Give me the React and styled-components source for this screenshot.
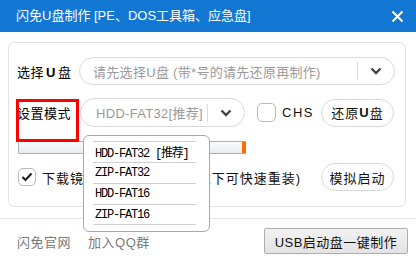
import React from 'react';
import styled, { createGlobalStyle } from 'styled-components';

const Global = createGlobalStyle`
  html, body { margin: 0; padding: 0; background: #fff; }
  body { font-family: "Liberation Sans", "Noto Sans CJK SC", sans-serif; }
  * { box-sizing: border-box; }
`;

const Window = styled.div`
  position: relative;
  width: 416px;
  height: 261px;
  overflow: hidden;
  background: #fff;
  display: flex;
  flex-direction: column;
`;

const TitleBar = styled.div`
  height: 32px;
  flex: none;
  background: #1177d3;
  color: #fff;
  display: flex;
  align-items: center;
  justify-content: space-between;
  padding: 0 12px 0 16px;
  font-size: 13px;
  line-height: 16px;
`;

const Card = styled.div`
  margin: 10px 10px 0 8px;
  border: 1px solid #e4e4e4;
  border-radius: 6px;
  padding: 14px 10px 15px 8px;
  display: flex;
  flex-direction: column;
`;

const Row = styled.div`
  display: flex;
  align-items: center;
  height: ${p => p.$h || 28}px;
  margin-top: ${p => p.$mt || 0}px;
`;

const Label = styled.div`
  width: ${p => p.$w}px;
  flex: none;
  font-size: 13px;
  color: #000;
  letter-spacing: 0.5px;
  b { font-weight: 700; margin: 0 2px; }
`;

const Select = styled.div`
  display: flex;
  align-items: center;
  height: 100%;
  ${p => (p.$w ? `width: ${p.$w}px; flex: none;` : 'flex: 1;')}
  border: 1px solid #d9d9d9;
  border-radius: 15px;
  padding-left: ${p => p.$pl || 13}px;
`;

const SelectText = styled.div`
  flex: 1;
  font-size: 13px;
  color: #9a9a9a;
  white-space: nowrap;
  overflow: hidden;
  letter-spacing: 0.3px;
`;

const SelectArrow = styled.div`
  flex: none;
  width: 37px;
  height: 18px;
  border-left: 1px solid #dcdcdc;
  display: flex;
  align-items: center;
  justify-content: center;
`;

const Check = styled.div`
  flex: none;
  width: ${p => p.$s}px;
  height: ${p => p.$s}px;
  margin-left: ${p => p.$ml}px;
  border: 1px solid #b9b9b9;
  border-radius: 5px;
  background: #fff;
  display: flex;
  align-items: center;
  justify-content: center;
`;

const Text = styled.div`
  font-size: 13px;
  color: ${p => p.$c || '#111'};
  margin-left: ${p => p.$ml || 0}px;
  letter-spacing: ${p => p.$ls || 1}px;
  white-space: nowrap;
`;

const PillButton = styled.div`
  flex: none;
  margin-left: auto;
  margin-right: 1px;
  width: 73px;
  height: 28px;
  border: 1px solid #dadada;
  border-radius: 14px;
  background: #fff;
  display: flex;
  align-items: center;
  justify-content: center;
  font-size: 13px;
  color: #111;
  letter-spacing: 1px;
  b { font-weight: 700; }
`;

const Progress = styled.div`
  margin: 14px 0 0 1px;
  width: 228px;
  height: 13px;
  border: 1px solid #aab2c0;
  border-right: none;
  background: linear-gradient(#fbfbfc, #e9ebf0);
  display: flex;
  justify-content: flex-end;
`;

const ProgressEnd = styled.div`
  width: 4px;
  height: 100%;
  background: #ff6a00;
`;

const Sep = styled.div`
  margin-top: 11px;
  height: 1px;
  background: #e6e6e6;
  flex: none;
`;

const Footer = styled.div`
  margin-top: 9px;
  height: 26px;
  display: flex;
  align-items: center;
  padding: 0 8px 0 17px;
`;

const Link = styled.div`
  font-size: 13px;
  color: #7a7a7a;
  margin-right: 17px;
  letter-spacing: 0.5px;
`;

const MakeButton = styled.div`
  margin-left: auto;
  width: 144px;
  height: 26px;
  border: 1px solid #adadad;
  border-radius: 2px;
  background: linear-gradient(#f2f2f2, #e3e3e3);
  display: flex;
  align-items: center;
  justify-content: center;
  font-size: 13px;
  color: #111;
  letter-spacing: 0.5px;
`;

const Highlight = styled.div`
  position: absolute;
  left: 16px;
  top: 99px;
  width: 63px;
  height: 43px;
  border: 3px solid #f00;
  pointer-events: none;
`;

const Menu = styled.div`
  position: absolute;
  left: 83px;
  top: 135px;
  width: 127px;
  height: 97px;
  background: #fff;
  border: 1px solid #a8a8a8;
  border-radius: 6px;
  padding: 5px 13px 0 9px;
`;

const MenuItem = styled.div`
  height: 21px;
  border-top: 1px solid #cfcfcf;
  ${p => (p.$last ? 'border-bottom: 1px solid #cfcfcf;' : '')}
  padding-left: 2px;
  display: flex;
  align-items: center;
  font-family: "Liberation Mono", "Noto Sans CJK SC", monospace;
  font-size: 12px;
  letter-spacing: -1.2px;
  color: #000;
  white-space: nowrap;
`;

const Chevron = () => (
  <svg width="12" height="8" viewBox="0 0 12 8">
    <polyline points="1.5,1.5 6,6 10.5,1.5" fill="none" stroke="#444" strokeWidth="2.4" />
  </svg>
);

const CloseIcon = () => (
  <svg width="13" height="13" viewBox="0 0 13 13">
    <path d="M1.5 1.5 L11.5 11.5 M11.5 1.5 L1.5 11.5" stroke="#fff" strokeWidth="2" />
  </svg>
);

const Tick = () => (
  <svg width="12" height="10" viewBox="0 0 12 10">
    <polyline points="1.5,5 4.5,8 10.5,1.5" fill="none" stroke="#222" strokeWidth="2.2" />
  </svg>
);

const menuItems = ['HDD-FAT32 [推荐]', 'ZIP-FAT32', 'HDD-FAT16', 'ZIP-FAT16'];

export default function App() {
  return (
    <Window>
      <Global />
      <TitleBar>
        <span>闪免U盘制作 [PE、DOS工具箱、应急盘]</span>
        <CloseIcon />
      </TitleBar>
      <Card>
        <Row>
          <Label $w={62}>选择<b>U</b>盘</Label>
          <Select>
            <SelectText>请先选择U盘 (带*号的请先还原再制作)</SelectText>
            <SelectArrow><Chevron /></SelectArrow>
          </Select>
        </Row>
        <Row $mt={13} $h={29}>
          <Label $w={63}>设置模式</Label>
          <Select $w={165} $pl={15}>
            <SelectText>HDD-FAT32[推荐]</SelectText>
            <SelectArrow><Chevron /></SelectArrow>
          </Select>
          <Check $s={19} $ml={12} />
          <Text $ml={6} $ls={1.5}>CHS</Text>
          <PillButton>还原<b>U</b>盘</PillButton>
        </Row>
        <Progress><ProgressEnd /></Progress>
        <Row $mt={9}>
          <Check $s={18} $ml={1}><Tick /></Check>
          <Text $ml={6}>下载镜像到U盘（在PE环境下可快速重装)</Text>
          <PillButton>模拟启动</PillButton>
        </Row>
      </Card>
      <Sep />
      <Footer>
        <Link>闪免官网</Link>
        <Link>加入QQ群</Link>
        <MakeButton>USB启动盘一键制作</MakeButton>
      </Footer>
      <Highlight />
      <Menu>
        {menuItems.map((t, i) => (
          <MenuItem key={t} $last={i === menuItems.length - 1}>{t}</MenuItem>
        ))}
      </Menu>
    </Window>
  );
}
